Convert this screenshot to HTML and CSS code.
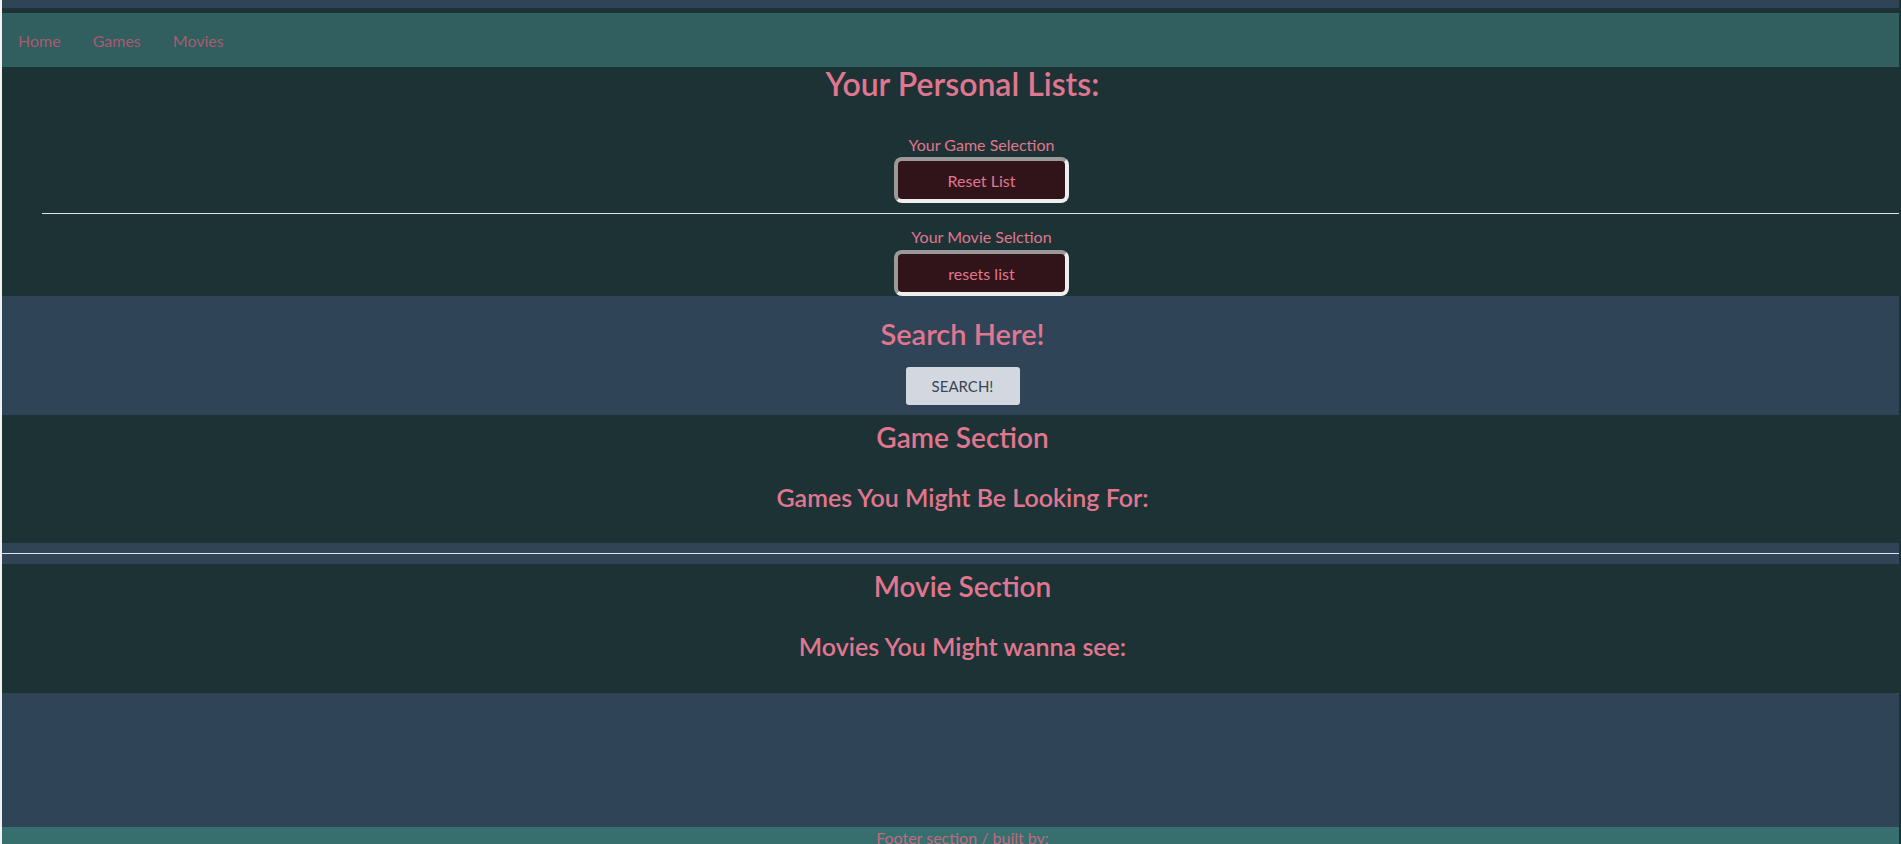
FILE: index.html
```html
<!DOCTYPE html>
<html>
<head>
<meta charset="utf-8">
<link rel="stylesheet" href="styles.css">
</head>
<body>
<div class="page">
  <div class="topbar"></div>
  <nav class="nav">
    <a class="nav-link" href="#">Home</a>
    <a class="nav-link" href="#">Games</a>
    <a class="nav-link" href="#">Movies</a>
  </nav>
  <section class="lists">
    <h1 class="title">Your Personal Lists:</h1>
    <div class="lists-inner">
      <div class="list-group">
        <p class="label label-first">Your Game Selection</p>
        <button class="reset-btn">Reset List</button>
      </div>
      <hr class="rule-short">
      <div class="list-group">
        <p class="label label-second">Your Movie Selction</p>
        <button class="reset-btn">resets list</button>
      </div>
    </div>
  </section>
  <section class="search">
    <h2 class="search-title">Search Here!</h2>
    <button class="search-btn">SEARCH!</button>
  </section>
  <section class="block">
    <h2 class="block-title">Game Section</h2>
    <h3 class="block-sub">Games You Might Be Looking For:</h3>
  </section>
  <div class="divider"><hr class="rule-full"></div>
  <section class="block block-last">
    <h2 class="block-title">Movie Section</h2>
    <h3 class="block-sub">Movies You Might wanna see:</h3>
  </section>
  <div class="empty"></div>
  <footer class="footer">Footer section / built by:</footer>
</div>
</body>
</html>
```
FILE: styles.css
```css
* { box-sizing: border-box; }
html, body { overflow: hidden; }
body { margin: 0; background: #1c3234; font-family: Lato, "Open Sans", sans-serif; }
.page { width: 1899px; border-left: 2px solid #f2f2f2; background: #1c3234; }
.topbar { height: 8px; background: #2f4456; margin-bottom: 5px; }
.nav { height: 54px; background: #315e5e; display: flex; align-items: center; gap: 32px; padding-left: 16px; }
.nav-link { color: #a85b70; text-decoration: none; font-size: 16px; }
.lists { padding-top: 1px; }
.title { margin: 0; padding-left: 24px; text-align: center; font-size: 32px; line-height: 32px; font-weight: 600; color: #e0768f; }
.lists-inner { margin-left: 40px; }
.list-group { display: flex; flex-direction: column; align-items: center; padding-left: 22px; }
.label { margin: 0; font-size: 16px; line-height: 16px; color: #e0768f; }
.label-first { margin-top: 37px; margin-bottom: 4px; }
.label-second { margin-top: 15px; margin-bottom: 5px; }
.reset-btn { width: 175px; height: 46px; border: 4px solid; border-color: #9a9a9a #eeeeee #eeeeee #9a9a9a; border-radius: 8px; background: #31141a; color: #e0768f; font-family: inherit; font-size: 16px; padding: 0; }
.rule-short { margin: 10px 0 0; border: 0; border-top: 1px solid #dfe3e6; height: 0; }
.search { background: #2f4456; padding: 23px 0 10px 24px; display: flex; flex-direction: column; align-items: center; }
.search-title { margin: 0 0 19px; font-size: 29px; line-height: 29px; font-weight: 600; color: #e0768f; }
.search-btn { width: 114px; height: 38px; border: 0; border-radius: 3px; background: #d3d8e0; color: #3a4555; font-family: inherit; font-size: 15px; padding: 0; }
.block { padding: 8px 0 33px 24px; text-align: center; }
.block-last { padding-bottom: 34px; }
.block-title { margin: 0; font-size: 28px; line-height: 28px; font-weight: 600; color: #e0768f; }
.block-sub { margin: 34px 0 0; font-size: 25px; line-height: 25px; font-weight: 600; color: #e0768f; }
.divider { height: 21px; background: #2f4456; padding-top: 10px; }
.rule-full { margin: 0; border: 0; border-top: 1px solid #dfe3e6; height: 0; }
.empty { height: 134px; background: #2f4456; }
.footer { height: 40px; padding: 3px 0 0 24px; background: #376f6f; text-align: center; color: #c06a80; font-size: 16px; line-height: 16px; }
```
